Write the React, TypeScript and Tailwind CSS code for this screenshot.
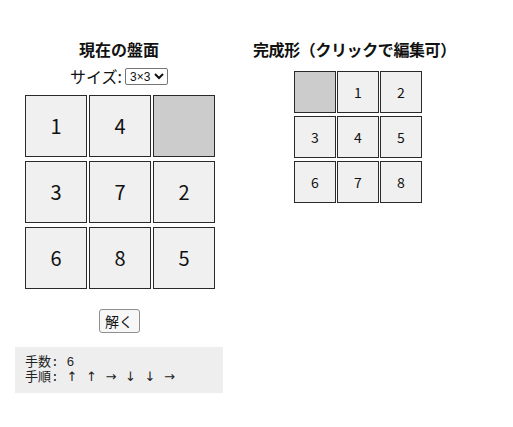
import { useState } from 'react'

type Board = number[]

const START: Board = [1, 4, 0, 3, 7, 2, 6, 8, 5]
const GOAL: Board = [0, 1, 2, 3, 4, 5, 6, 7, 8]

// tile moves: arrow = direction the tile slides into the blank
function solve(start: Board, goal: Board, n: number): string[] | null {
  const key = (b: Board) => b.join(',')
  const target = key(goal)
  const prev = new Map<string, [string, string] | null>()
  prev.set(key(start), null)
  let queue: Board[] = [start]
  while (queue.length) {
    const next: Board[] = []
    for (const b of queue) {
      const k = key(b)
      if (k === target) {
        const out: string[] = []
        let cur = k
        while (prev.get(cur)) {
          const [p, m] = prev.get(cur)!
          out.unshift(m)
          cur = p
        }
        return out
      }
      const z = b.indexOf(0)
      const r = Math.floor(z / n), c = z % n
      const opts: [number, number, string][] = [
        [r + 1, c, '↑'], [r - 1, c, '↓'], [r, c + 1, '←'], [r, c - 1, '→'],
      ]
      for (const [rr, cc, m] of opts) {
        if (rr < 0 || rr >= n || cc < 0 || cc >= n) continue
        const nb = b.slice()
        nb[z] = nb[rr * n + cc]
        nb[rr * n + cc] = 0
        const nk = key(nb)
        if (prev.has(nk)) continue
        prev.set(nk, [k, m])
        next.push(nb)
      }
    }
    queue = next
    if (prev.size > 400000) return null
  }
  return null
}

export default function App() {
  const [board, setBoard] = useState<Board>(START)
  const [goal, setGoal] = useState<Board>(GOAL)
  const [moves, setMoves] = useState<string[] | null>(['↑', '↑', '→', '↓', '↓', '→'])
  const n = 3

  const clickTile = (i: number) => {
    const z = board.indexOf(0)
    const d = Math.abs(Math.floor(i / n) - Math.floor(z / n)) + Math.abs((i % n) - (z % n))
    if (d !== 1) return
    const nb = board.slice()
    nb[z] = nb[i]
    nb[i] = 0
    setBoard(nb)
  }

  const clickGoal = (i: number) => {
    const z = goal.indexOf(0)
    const ng = goal.slice()
    ng[z] = ng[i]
    ng[i] = 0
    setGoal(ng)
  }

  const rows = [0, 1, 2]

  return (
    <div className="flex pt-[39px] text-[#111]" style={{ fontFamily: '"Noto Sans CJK JP", "Noto Sans", sans-serif' }}>
      <div className="ml-[15px] w-[208px] flex flex-col items-center">
        <h3 className="text-[16px] leading-[20px] font-bold">現在の盤面</h3>
        <div className="mt-[5px] h-[24px] flex items-center text-[16px] leading-[20px]">
          サイズ:
          <select
            className="ml-[3px] h-[17px] text-[12px] leading-[14px] border border-[#767676] rounded-[2px] bg-white pl-0 pr-0"
            style={{ fontFamily: '"Liberation Sans", Arial, sans-serif' }}
          >
            <option>3×3</option>
            <option>4×4</option>
          </select>
        </div>
        <div className="mt-[7px] ml-[2px] flex flex-col gap-[4px]">
          {rows.map(r => (
            <div key={r} className="flex gap-[2px]">
              {rows.map(c => {
                const v = board[r * n + c]
                return (
                  <button
                    key={c}
                    onClick={() => clickTile(r * n + c)}
                    className={`w-[62px] h-[62px] border-[1.5px] border-[#2a2a2a] flex items-center justify-center text-[20px] ${v === 0 ? 'bg-[#ccc]' : 'bg-[#f0f0f0]'}`}
                  >
                    {v === 0 ? '' : v}
                  </button>
                )
              })}
            </div>
          ))}
        </div>
        <button
          onClick={() => setMoves(solve(board, goal, n))}
          className="mt-[20px] h-[24px] w-[41px] text-[14px] border border-[#8f8f8f] rounded-[3px] bg-[#f7f7f7] flex items-center justify-center"
        >
          解く
        </button>
        <pre
          className="mt-[14px] self-stretch h-[46px] bg-[#eee] px-[10px] pt-[9px] text-[13px] leading-[14px] text-[#222]"
          style={{ fontFamily: '"Liberation Mono", "Noto Sans CJK JP", monospace' }}
        >
          {moves ? (
            <>
              {`手数: ${moves.length}\n手順: `}
              {moves.map((m, i) => (
                <span key={i} className="inline-block w-[19.5px]" style={{ fontFamily: '"DejaVu Sans", sans-serif' }}>{m}</span>
              ))}
            </>
          ) : '解なし'}
        </pre>
      </div>
      <div className="ml-[30px] flex flex-col">
        <h3 className="text-[16px] leading-[20px] font-bold tracking-[-0.4px]">完成形（クリックで編集可）</h3>
        <div className="mt-[12px] ml-[41px] flex flex-col gap-[3px]">
          {rows.map(r => (
            <div key={r} className="flex gap-[1px]">
              {rows.map(c => {
                const v = goal[r * n + c]
                return (
                  <button
                    key={c}
                    onClick={() => clickGoal(r * n + c)}
                    className={`w-[42px] h-[42px] border-[1.5px] border-[#2a2a2a] flex items-center justify-center text-[14px] ${v === 0 ? 'bg-[#ccc]' : 'bg-[#f0f0f0]'}`}
                  >
                    {v === 0 ? '' : v}
                  </button>
                )
              })}
            </div>
          ))}
        </div>
      </div>
    </div>
  )
}
